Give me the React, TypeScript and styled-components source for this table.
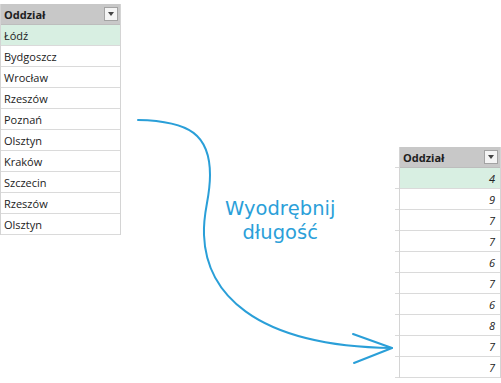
import React from "react";
import styled, { createGlobalStyle } from "styled-components";

const Global = createGlobalStyle`
  *, *::before, *::after { box-sizing: border-box; }
  html, body { margin: 0; padding: 0; background: #ffffff; }
  body { width: 501px; height: 383px; overflow: hidden; font-family: "Open Sans", "Noto Sans", sans-serif; }
`;

const Page = styled.div`
  display: flex;
  width: 501px;
  height: 383px;
`;

const Table = styled.div<{ $top: number; $width: number }>`
  margin-top: ${(p) => p.$top}px;
  width: ${(p) => p.$width}px;
  flex: none;
  display: flex;
  flex-direction: column;
  border-left: 1px solid #d4d4d4;
  border-right: 1px solid #d4d4d4;
  align-self: flex-start;
`;

const Header = styled.div`
  height: 21px;
  border-bottom: 1px solid #bdbdbd;
  background: #c8c8c8;
  display: flex;
  align-items: center;
  justify-content: space-between;
  padding: 0 2px 0 3px;
  font-size: 11px;
  font-weight: 700;
  color: #1e1e1e;
`;

const DropBtn = styled.div`
  width: 14px;
  height: 14px;
  background: #f4f4f4;
  border: 1px solid #a3a3a3;
  display: flex;
  align-items: center;
  justify-content: center;
`;

const Tri = styled.div`
  width: 0;
  height: 0;
  border-left: 3.5px solid transparent;
  border-right: 3.5px solid transparent;
  border-top: 4px solid #444;
`;

const Row = styled.div<{ $sel?: boolean; $num?: boolean }>`
  height: 21px;
  border-bottom: 1px solid #dadada;
  background: ${(p) => (p.$sel ? "#d8efe2" : "#ffffff")};
  display: flex;
  align-items: center;
  justify-content: ${(p) => (p.$num ? "flex-end" : "flex-start")};
  padding: ${(p) => (p.$num ? "0 5px 0 0" : "0 0 0 3px")};
  font-size: 11px;
  font-style: ${(p) => (p.$num ? "italic" : "normal")};
  color: #222;
`;

const Middle = styled.div`
  position: relative;
  flex: 1;
  display: flex;
  flex-direction: column;
  align-items: flex-start;
  padding: 197px 0 0 104px;
`;

const ArrowSvg = styled.svg`
  position: absolute;
  left: 0;
  top: 0;
  overflow: visible;
`;

const Label = styled.div`
  position: relative;
  font-family: "DejaVu Sans", sans-serif;
  font-size: 19.5px;
  line-height: 24px;
  color: #2b9fd9;
  text-align: center;
`;

const Ticks = styled.div`
  margin-top: 147px;
  width: 4px;
  flex: none;
  display: flex;
  flex-direction: column;
  align-self: flex-start;
`;

const Tick = styled.div`
  height: 21px;
  border-bottom: 1px solid #dadada;
`;

const cities = ["Łódź", "Bydgoszcz", "Wrocław", "Rzeszów", "Poznań", "Olsztyn", "Kraków", "Szczecin", "Rzeszów", "Olsztyn"];
const lengths = [4, 9, 7, 7, 6, 7, 6, 8, 7, 7];

const HeaderCell = () => (
  <Header>
    <span>Oddział</span>
    <DropBtn>
      <Tri />
    </DropBtn>
  </Header>
);

export default function App() {
  return (
    <>
      <Global />
      <Page>
        <Table $top={4} $width={121}>
          <HeaderCell />
          {cities.map((c, i) => (
            <Row key={i} $sel={i === 0}>
              {c}
            </Row>
          ))}
        </Table>
        <Middle>
          <ArrowSvg width="274" height="383" viewBox="121 0 274 383">
            <path
              d="M138 120 C190 121 210 135 210 175 C210 200 203 210 204 235 C206 290 250 346 392 348"
              fill="none"
              stroke="#2a9fd8"
              strokeWidth="2"
              strokeLinecap="round"
            />
            <path d="M353 334 L392 348 L354 363" fill="none" stroke="#2a9fd8" strokeWidth="2" strokeLinecap="round" strokeLinejoin="round" />
          </ArrowSvg>
          <Label>
            Wyodrębnij
            <br />
            długość
          </Label>
        </Middle>
        <Ticks>
          <Tick />
          {lengths.map((_, i) => (
            <Tick key={i} />
          ))}
        </Ticks>
        <Table $top={147} $width={102}>
          <HeaderCell />
          {lengths.map((n, i) => (
            <Row key={i} $sel={i === 0} $num>
              {n}
            </Row>
          ))}
        </Table>
      </Page>
    </>
  );
}
